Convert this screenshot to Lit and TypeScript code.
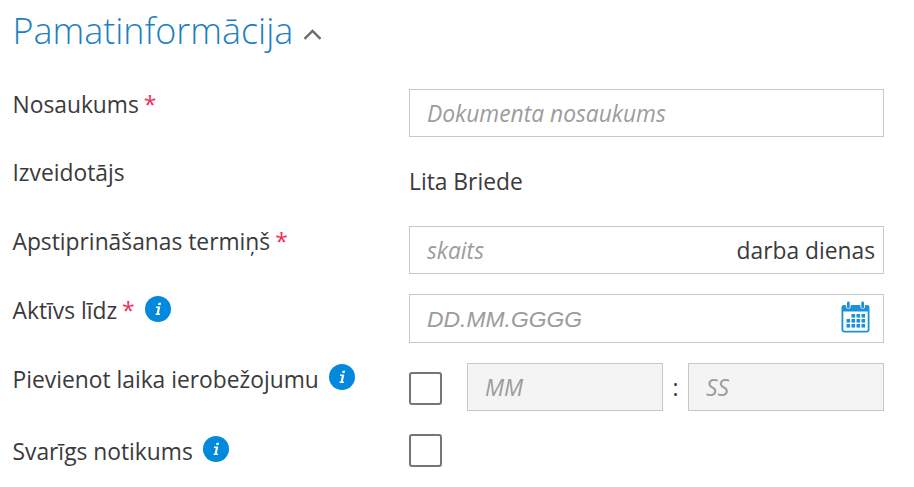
import { LitElement, html, css, svg, nothing } from "lit";
import { customElement, property } from "lit/decorators.js";

@customElement("info-dot")
class InfoDot extends LitElement {
  static styles = css`
    :host { display: block; width: 26px; height: 26px; }
    svg { display: block; }
  `;
  render() {
    return html`<svg width="26" height="26" viewBox="0 0 26 26">
      <circle cx="13" cy="13" r="13" fill="#0389dc" />
      <path d="M13.6 6.8h2.5l-.5 2.3h-2.5zM11.2 10.5h4.1l-1.5 7.1h1.3l-.3 1.4h-4.3l.3-1.4h.9l1.1-5.7h-1.9z" fill="#fff" />
    </svg>`;
  }
}

@customElement("form-row")
class FormRow extends LitElement {
  @property() label = "";
  @property({ type: Boolean }) required = false;
  @property({ type: Boolean }) info = false;
  static styles = css`
    :host { display: grid; grid-template-columns: 396px 475px; align-items: start; }
    .label {
      display: flex; height: 32px; line-height: 32px; white-space: nowrap;
      margin-top: var(--label-shift, 0px);
    }
    .text { margin-left: -0.5px; }
    .star { color: #ee2c55; margin-left: 5px; }
    info-dot { margin: var(--dot-top, 2px) 0 0 10.5px; }
  `;
  render() {
    return html`
      <div class="label">
        <span class="text">${this.label}</span>
        ${this.required ? html`<span class="star">*</span>` : nothing}
        ${this.info ? html`<info-dot></info-dot>` : nothing}
      </div>
      <slot></slot>
    `;
  }
}

@customElement("app-root")
class AppRoot extends LitElement {
  static styles = css`
    :host {
      display: block; box-sizing: border-box; height: 487px; overflow: hidden;
      padding: 4px 0 0 13px; background: #fff; color: #3a3a3c;
      font: 22.8px "Open Sans", sans-serif;
    }
    .head { display: flex; height: 85px; }
    h1 { margin: 0 0 0 -0.5px; font-size: 35.9px; font-weight: 300; line-height: 54px; color: #1c7fc3; }
    .chevron { margin: 23px 0 0 10px; }
    .rows { display: grid; grid-template-rows: 69px 68px 68px 69px 71px 50px; }
    .field {
      display: flex; align-items: center; box-sizing: border-box; height: 48px;
      border: 1px solid #c8c8c8; padding: 2px 8px 0 17px; line-height: 44px;
    }
    .tall { height: 49px; line-height: 48px; padding-top: 0; }
    .hint { color: #9c9c9c; font-style: italic; flex: 1; }
    .date { font-family: "Liberation Sans", sans-serif; font-size: 22.9px; }
    .value { line-height: 48px; }
    .cal { margin: -3px 5px 0 0; }
    .time { display: grid; grid-template-columns: 58px 196px 25px 196px; }
    .off { background: #f4f4f4; }
    .colon { text-align: center; line-height: 50px; }
    .check {
      box-sizing: border-box; width: 33px; height: 33px; border: 2px solid #757575;
      border-radius: 3px; margin-top: 9px;
    }
    .last { margin-top: 0; }
    .author { --label-shift: -1px; }
    .until { --label-shift: 1px; --dot-top: 1px; }
    .limit { --label-shift: 1px; --dot-top: 0px; }
    .important { --label-shift: 2px; --dot-top: 0px; }
  `;

  calendar() {
    const cells = [
      [11, 13], [16, 13], [21, 13],
      [6, 18], [11, 18], [16, 18], [21, 18],
      [6, 23], [11, 23], [16, 23], [21, 23],
    ];
    return html`<svg class="cal" width="29" height="32" viewBox="0 0 29 32">
      <path d="M3 4H26Q28.5 4 28.5 6V28.5Q28.5 31.5 25.5 31.5H3.5Q.5 31.5 .5 28.5V6Q.5 4 3 4Z" fill="#1b91dc" />
      <path d="M2.3 10.5H26.7V28.5Q26.7 29.7 25.5 29.7H3.5Q2.3 29.7 2.3 28.5Z" fill="#fff" />
      <path d="M7.3 2.5V5.5M21.7 2.5V5.5" stroke="#fff" stroke-width="4.8" stroke-linecap="round" />
      <path d="M7.3 2V6M21.7 2V6" stroke="#1b91dc" stroke-width="2.8" stroke-linecap="round" />
      ${cells.map(([x, y]) => svg`<rect x=${x - 0.5} y=${y} width="3.6" height="3.6" fill="#1b91dc" />`)}
    </svg>`;
  }

  render() {
    return html`
      <div class="head">
        <h1>Pamatinformācija</h1>
        <svg class="chevron" width="19" height="14" viewBox="0 0 19 14">
          <path d="M1.5 11.8L9.5 4L17.5 11.8" fill="none" stroke="#6c6c6c" stroke-width="2.4" />
        </svg>
      </div>
      <div class="rows">
        <form-row label="Nosaukums" required>
          <div class="field"><span class="hint">Dokumenta nosaukums</span></div>
        </form-row>
        <form-row class="author" label="Izveidotājs"><div class="value">Lita Briede</div></form-row>
        <form-row label="Apstiprināšanas termiņš" required>
          <div class="field"><span class="hint">skaits</span><span>darba dienas</span></div>
        </form-row>
        <form-row class="until" label="Aktīvs līdz" required info>
          <div class="field tall"><span class="hint date">DD.MM.GGGG</span>${this.calendar()}</div>
        </form-row>
        <form-row class="limit" label="Pievienot laika ierobežojumu" info>
          <div class="time">
            <div class="check"></div>
            <div class="field off"><span class="hint">MM</span></div>
            <div class="colon">:</div>
            <div class="field off"><span class="hint">SS</span></div>
          </div>
        </form-row>
        <form-row class="important" label="Svarīgs notikums" info><div class="check last"></div></form-row>
      </div>
    `;
  }
}
